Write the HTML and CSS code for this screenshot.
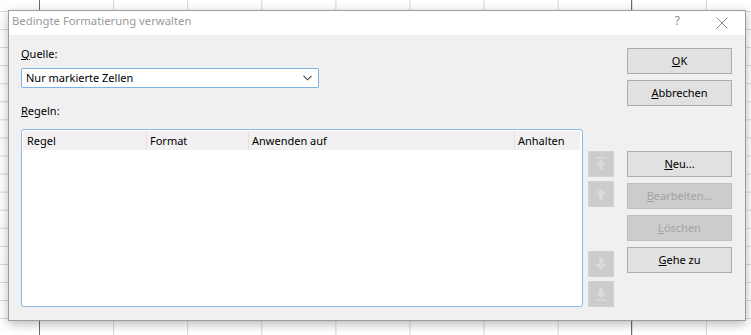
FILE: index.html
```html
<!DOCTYPE html>
<html lang="de">
<head>
    <meta charset="UTF-8">
    <title>Bedingte Formatierung verwalten</title>
    <link rel="stylesheet" href="styles.css">
</head>
<body>

    <!-- Dialogfenster -->
    <div class="dialog">
        <div class="titlebar">
            <span class="title">Bedingte Formatierung verwalten</span>
            <span class="help">?</span>
            <svg class="close" width="12" height="12" viewBox="0 0 12 12">
                <path d="M0.5 0.5 L11.5 11.5 M11.5 0.5 L0.5 11.5" stroke="#8a8a8a" stroke-width="1" fill="none"/>
            </svg>
        </div>

        <div class="content">
            <div class="main">
                <div class="label"><u>Q</u>uelle:</div>
                <div class="select">
                    <span>Nur markierte Zellen</span>
                    <svg width="9" height="6" viewBox="0 0 9 6">
                        <path d="M0.5 0.8 L4.5 4.8 L8.5 0.8" stroke="#444" stroke-width="1.1" fill="none"/>
                    </svg>
                </div>

                <div class="label rules-label"><u>R</u>egeln:</div>
                <div class="rules">
                    <div class="rules-head">
                        <div class="col">Regel</div>
                        <div class="col">Format</div>
                        <div class="col">Anwenden auf</div>
                        <div class="col">Anhalten</div>
                    </div>
                </div>
            </div>

            <!-- Pfeile zum Verschieben -->
            <div class="movers">
                <button class="mover">
                    <svg width="24" height="24" viewBox="0 0 24 24"><rect x="7" y="5" width="10" height="1.5"/><path d="M12 8 L17 13 H14 V18 H10 V13 H7 Z"/></svg>
                </button>
                <button class="mover">
                    <svg width="24" height="24" viewBox="0 0 24 24"><path d="M12 6.5 L17.5 12 H14 V18 H10 V12 H6.5 Z"/></svg>
                </button>
                <button class="mover mover-low">
                    <svg width="24" height="24" viewBox="0 0 24 24"><path d="M12 17.5 L17.5 12 H14 V6 H10 V12 H6.5 Z"/></svg>
                </button>
                <button class="mover">
                    <svg width="24" height="24" viewBox="0 0 24 24"><path d="M12 16 L17 11 H14 V6 H10 V11 H7 Z"/><rect x="7" y="17.5" width="10" height="1.5"/></svg>
                </button>
            </div>

            <div class="actions">
                <button class="btn"><u>O</u>K</button>
                <button class="btn"><u>A</u>bbrechen</button>
                <button class="btn btn-gap"><u>N</u>eu...</button>
                <button class="btn" disabled><u>B</u>earbeiten...</button>
                <button class="btn" disabled><u>L</u>öschen</button>
                <button class="btn"><u>G</u>ehe zu</button>
            </div>
        </div>
    </div>

</body>
</html>
```

FILE: styles.css
```css
/* Tabellenblatt im Hintergrund */
html, body {
    height: 100%;
}

body {
    margin: 0;
    overflow: hidden;
    font-family: 'Noto Sans', sans-serif;
    font-size: 11px;
    color: #000;
    background-color: #fff;
    background-image:
        linear-gradient(#6a6a6a, #6a6a6a),
        linear-gradient(#6a6a6a, #6a6a6a),
        linear-gradient(to right, #d6d6d6 1px, transparent 1px),
        linear-gradient(to bottom, #d6d6d6 1px, transparent 1px);
    background-size: 1px 100%, 1px 100%, 74.1px 100%, 100% 18.07px;
    background-position: 39px 0, 631px 0, 39px 0, 0 11px;
    background-repeat: no-repeat, no-repeat, repeat, repeat;
}

/* Dialog */
.dialog {
    box-sizing: border-box;
    width: 738px;
    height: 311px;
    margin: 10px 0 0 8px;
    border: 1px solid #9c9c9c;
    background: #f0f0f0;
    box-shadow: 0 3px 10px rgba(0, 0, 0, 0.28);
    display: flex;
    flex-direction: column;
}

.titlebar {
    display: flex;
    align-items: flex-start;
    height: 24px;
    background: #fff;
    line-height: 20px;
}

.title {
    flex-grow: 1;
    padding-left: 3px;
    font-size: 11.3px;
    color: #9a9a9a;
}

.help {
    color: #8a8a8a;
    font-size: 12px;
    margin-right: 36px;
}

.close {
    margin: 6px 17px 0 0;
}

.content {
    display: flex;
    padding: 11px 0 0 12px;
}

/* Linke Spalte */
.main {
    width: 562px;
}

.label {
    line-height: 16px;
    margin-bottom: 6px;
}

.rules-label {
    margin: 15px 0 10px;
}

.select {
    box-sizing: border-box;
    width: 298px;
    height: 20px;
    border: 1px solid #7fb3e3;
    border-radius: 2px;
    background: #fff;
    display: flex;
    align-items: center;
    justify-content: space-between;
    padding: 0 6px 0 4px;
    line-height: 18px;
}

.rules {
    box-sizing: border-box;
    height: 178px;
    border: 1px solid #8dbbe5;
    border-radius: 3px;
    background: #fff;
    padding: 1px 2px 0 1px;
}

.rules-head {
    display: grid;
    grid-template-columns: 123px 102px 266px 65px;
    height: 19px;
    line-height: 19px;
    background: #f2f0f0;
}

.rules-head .col {
    padding-left: 4px;
}

.rules-head .col + .col {
    border-left: 1px solid #e2e2e2;
    padding-left: 3px;
}

/* Pfeiltasten */
.movers {
    display: flex;
    flex-direction: column;
    gap: 4px;
    margin: 105px 0 0 5px;
}

.mover {
    box-sizing: border-box;
    width: 26px;
    height: 26px;
    padding: 0;
    border: 1px solid #d2d2d2;
    background: #cccccc;
    fill: #dadada;
    display: flex;
    align-items: center;
    justify-content: center;
}

.mover-low {
    margin-top: 40px;
}

/* Schaltflächen rechts */
.actions {
    display: flex;
    flex-direction: column;
    gap: 6px;
    margin: 2px 0 0 13px;
}

.btn {
    box-sizing: border-box;
    width: 105px;
    height: 26px;
    padding: 0;
    border: 1px solid #adadad;
    background: #e1e1e1;
    font-family: 'Noto Sans', sans-serif;
    font-size: 11px;
    line-height: 24px;
    color: #000;
}

.btn:disabled {
    background: #cccccc;
    border-color: #bfbfbf;
    color: #a2a2a2;
}

.btn-gap {
    margin-top: 39px;
}
```
